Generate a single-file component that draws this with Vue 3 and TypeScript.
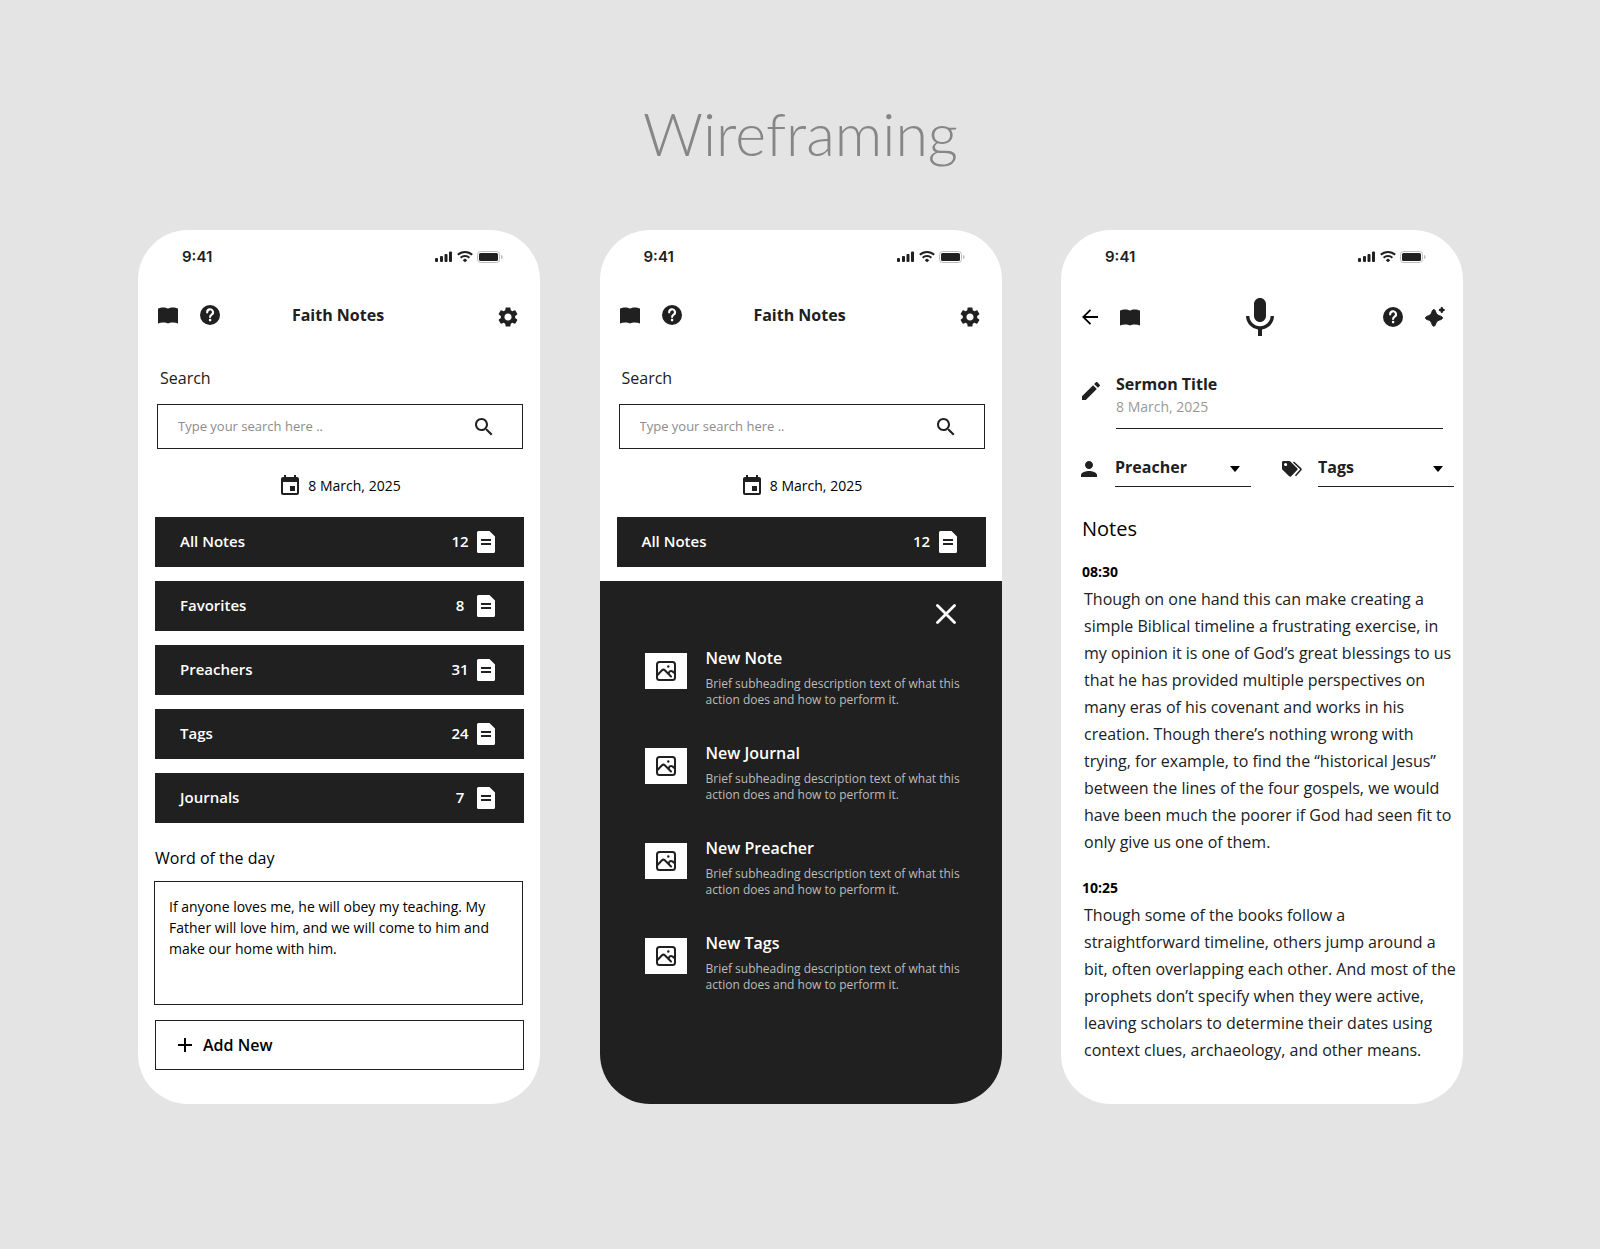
<script setup lang="ts">
import { ref } from 'vue'

interface Category {
  label: string
  count: number
}

interface NoteEntry {
  time: string
  text: string
}

const homeScreens = [
  { id: 'home', sheetOpen: false },
  { id: 'home-add', sheetOpen: true },
]

const categories: Category[] = [
  { label: 'All Notes', count: 12 },
  { label: 'Favorites', count: 8 },
  { label: 'Preachers', count: 31 },
  { label: 'Tags', count: 24 },
  { label: 'Journals', count: 7 },
]

const actions: string[] = ['New Note', 'New Journal', 'New Preacher', 'New Tags']

const sermonTitle = ref('Sermon Title')

const entries: NoteEntry[] = [
  {
    time: '08:30',
    text: `Though on one hand this can make creating a
simple Biblical timeline a frustrating exercise, in
my opinion it is one of God’s great blessings to us
that he has provided multiple perspectives on
many eras of his covenant and works in his
creation. Though there’s nothing wrong with
trying, for example, to find the “historical Jesus”
between the lines of the four gospels, we would
have been much the poorer if God had seen fit to
only give us one of them.`,
  },
  {
    time: '10:25',
    text: `Though some of the books follow a
straightforward timeline, others jump around a
bit, often overlapping each other. And most of the
prophets don’t specify when they were active,
leaving scholars to determine their dates using
context clues, archaeology, and other means.`,
  },
]
</script>

<template>
  <svg class="defs" width="0" height="0" aria-hidden="true">
    <symbol id="status" viewBox="0 0 68 14">
      <g fill="#202020">
        <rect x="0" y="8" width="3" height="4" rx="1" />
        <rect x="5" y="6" width="3" height="6" rx="1" />
        <rect x="9.5" y="4" width="3" height="8" rx="1" />
        <rect x="14" y="1.5" width="3" height="10.5" rx="1" />
        <path d="M30 8.6 32.3 10.2 30 12.2 27.7 10.2Z" />
      </g>
      <g fill="none" stroke="#202020" stroke-width="2">
        <path d="M22.8 4.8a10.4 10.4 0 0 1 14.4 0" />
        <path d="M25.6 7.7a6.4 6.4 0 0 1 8.8 0" />
      </g>
      <rect x="42.5" y="1.5" width="22" height="11" rx="3" fill="#fff" stroke="#bcbcbc" />
      <rect x="44" y="3" width="19" height="8" rx="1.5" fill="#202020" />
      <path d="M66 5c1.3.4 1.6 1.2 1.6 2s-.3 1.6-1.6 2z" fill="#bcbcbc" />
    </symbol>
    <symbol id="book" viewBox="0 0 20 17">
      <path d="M0 1.600C3 0 7.500 0 10 1.500 12.500 0 17 0 20 1.600V16.500C17 15.300 12.500 15.300 10 16.500 7.500 15.300 3 15.300 0 16.500Z" />
    </symbol>
    <symbol id="help" viewBox="0 0 20 20">
      <circle cx="10" cy="10" r="10" />
      <path d="M7.2 7.4a2.9 2.9 0 1 1 4.4 2.3c-1 .7-1.500 1.200-1.500 2.300" fill="none" stroke="#fff" stroke-width="2.1" stroke-linecap="round" />
      <circle cx="10.1" cy="15.1" r="1.3" fill="#fff" />
    </symbol>
    <symbol id="gear" viewBox="2 2 20 20">
      <path d="M19.140 12.940c.04-.3.06-.61.06-.94 0-.32-.02-.64-.07-.94l2.030-1.580c.18-.14.23-.41.12-.61l-1.920-3.320c-.12-.22-.37-.29-.59-.22l-2.390.96c-.5-.38-1.030-.7-1.620-.94l-.36-2.540c-.04-.24-.24-.41-.48-.41h-3.840c-.24 0-.43.17-.47.41l-.36 2.540c-.59.24-1.130.57-1.620.94l-2.390-.96c-.22-.08-.47 0-.59.22L2.740 8.870c-.12.21-.08.47.12.61l2.030 1.580c-.05.3-.09.63-.09.94s.02.64.07.94l-2.030 1.580c-.18.14-.23.41-.12.61l1.920 3.320c.12.22.37.29.59.22l2.390-.96c.5.38 1.030.7 1.620.94l.36 2.540c.05.24.24.41.48.41h3.840c.24 0 .44-.17.47-.41l.36-2.540c.59-.24 1.130-.56 1.620-.94l2.390.96c.22.08.47 0 .59-.22l1.920-3.320c.12-.22.07-.47-.12-.61l-2.010-1.580zM12 15.600c-1.980 0-3.600-1.620-3.600-3.600s1.620-3.600 3.600-3.600 3.600 1.620 3.600 3.600-1.620 3.600-3.600 3.600z" />
    </symbol>
    <symbol id="search" viewBox="0 0 24 24">
      <path d="M15.500 14h-.79l-.28-.27C15.410 12.590 16 11.110 16 9.500 16 5.910 13.090 3 9.500 3S3 5.910 3 9.500 5.910 16 9.500 16c1.610 0 3.090-.59 4.230-1.570l.27.28v.79l5 4.990L20.490 19l-4.990-5zm-6 0C7.010 14 5 11.990 5 9.500S7.010 5 9.500 5 14 7.010 14 9.500 11.990 14 9.500 14z" />
    </symbol>
    <symbol id="event" viewBox="0 0 24 24">
      <path d="M17 12h-5v5h5v-5zM16 1v2H8V1H6v2H5c-1.110 0-1.990.9-1.990 2L3 19c0 1.100.89 2 2 2h14c1.100 0 2-.9 2-2V5c0-1.100-.9-2-2-2h-1V1h-2zm3 18H5V8h14v11z" />
    </symbol>
    <symbol id="doc" viewBox="0 0 18 22">
      <path d="M1.500 0H12.500L18 5.500V20.500A1.500 1.500 0 0 1 16.500 22H1.500A1.500 1.500 0 0 1 0 20.500V1.500A1.500 1.500 0 0 1 1.500 0Z" fill="#fff" />
      <path d="M4 9h10M4 13h10" stroke="#202020" stroke-width="2" />
    </symbol>
    <symbol id="picture" viewBox="0 0 20 20">
      <g fill="none" stroke="#202020" stroke-width="2" stroke-linejoin="round">
        <rect x="1" y="1" width="18" height="18" rx="2.500" />
        <path d="M1.500 14 6 9.300c.8-.8 2-.8 2.800 0L15 15.500" stroke-linecap="round" />
        <path d="M13 13.200c-1-2.200 1.500-4 3.400-2.800L19 12.500" />
      </g>
      <circle cx="12.300" cy="5.500" r="1.200" fill="#202020" />
    </symbol>
    <symbol id="mic" viewBox="4 1 16 21">
      <path d="M12 14c1.660 0 2.990-1.340 2.990-3L15 5c0-1.660-1.340-3-3-3S9 3.340 9 5v6c0 1.660 1.340 3 3 3zm5.300-3c0 3-2.540 5.100-5.300 5.100S6.700 14 6.700 11H5c0 3.410 2.720 6.230 6 6.720V21h2v-3.280c3.280-.48 6-3.300 6-6.720h-1.700z" />
    </symbol>
    <symbol id="sparkle" viewBox="0 0 20 21">
      <path d="M8.800 2.600c1.200 0 1.700 1.600 2.200 3 .6 1.700 1.500 2.500 3.400 3.100 1.700.5 3.100 1 3.100 2.200s-1.400 1.700-3.100 2.200c-1.900.6-2.800 1.400-3.400 3.100-.5 1.400-1 3-2.200 3s-1.700-1.600-2.200-3c-.6-1.700-1.500-2.500-3.100-3.100C1.900 12.600.5 12.100.5 10.900s1.400-1.700 3-2.200c1.600-.6 2.500-1.400 3.100-3.100.5-1.400 1-3 2.200-3Z" stroke="#202020" />
      <path d="M16.800 1.200v3.600M15 3h3.600" stroke="#202020" stroke-width="2.400" stroke-linecap="round" />
    </symbol>
    <symbol id="pencil" viewBox="3 3 18 18">
      <path d="M3 17.250V21h3.750L17.810 9.940l-3.750-3.750L3 17.250zM20.710 7.040c.39-.39.39-1.020 0-1.410l-2.340-2.340c-.39-.39-1.020-.39-1.410 0l-1.830 1.830 3.750 3.750 1.830-1.830z" />
    </symbol>
    <symbol id="person" viewBox="4 4 16 16">
      <path d="M12 12c2.210 0 4-1.790 4-4s-1.790-4-4-4-4 1.790-4 4 1.790 4 4 4zm0 2c-2.670 0-8 1.340-8 4v2h16v-2c0-2.660-5.330-4-8-4z" />
    </symbol>
    <symbol id="tags" viewBox="0 0 20 16">
      <path fill-rule="evenodd" d="M1.300 0H7.200c.5 0 .9.200 1.200.5l6.800 6.700c.6.600.6 1.300 0 1.900l-6 6.200c-.6.600-1.400.6-2 0L.5 8.700C.2 8.400 0 8 0 7.500V1.300C0 .6.600 0 1.300 0ZM3.600 1.900a1.600 1.600 0 1 0 0 3.200 1.600 1.600 0 0 0 0-3.200Z" />
      <path d="M11.500 1 18.600 7.600c.5.500.5 1 0 1.500L13.500 14.800" fill="none" stroke="#202020" stroke-width="1.500" />
    </symbol>
  </svg>

  <main class="page">
    <h1 class="title">Wireframing</h1>

    <div class="phones">
      <section v-for="screen in homeScreens" :key="screen.id" class="phone">
        <div class="status">
          <span class="clock">9:41</span>
          <svg class="status-icons"><use href="#status" /></svg>
        </div>

        <header class="bar">
          <div class="tools">
            <button class="icon-btn" aria-label="Library"><svg class="i-book"><use href="#book" /></svg></button>
            <button class="icon-btn" aria-label="Help"><svg class="i-20"><use href="#help" /></svg></button>
          </div>
          <h2 class="bar-title">Faith Notes</h2>
          <div class="tools tools-end">
            <button class="icon-btn" aria-label="Settings"><svg class="i-20"><use href="#gear" /></svg></button>
          </div>
        </header>

        <div class="home">
          <label class="search-label" :for="`${screen.id}-search`">Search</label>
          <div class="search-box">
            <input :id="`${screen.id}-search`" class="search-input" type="text" placeholder="Type your search here .." />
            <button class="icon-btn" aria-label="Search"><svg class="i-24"><use href="#search" /></svg></button>
          </div>

          <div class="date">
            <svg class="i-24"><use href="#event" /></svg>
            <time datetime="2025-03-08">8 March, 2025</time>
          </div>

          <div class="list">
            <button
              v-for="item in screen.sheetOpen ? categories.slice(0, 1) : categories"
              :key="item.label"
              class="row"
            >
              <span class="row-label">{{ item.label }}</span>
              <span class="row-count">{{ item.count }}</span>
              <svg class="i-doc"><use href="#doc" /></svg>
            </button>
          </div>

          <template v-if="!screen.sheetOpen">
            <h3 class="word-title">Word of the day</h3>
            <p class="word-box">
              If anyone loves me, he will obey my teaching. My Father will love him, and we will come to him and make our home with him.
            </p>
            <button class="add">
              <svg class="i-plus" viewBox="0 0 14 14"><path d="M7 0v14M0 7h14" stroke="#000" stroke-width="2" /></svg>
              Add New
            </button>
          </template>
        </div>

        <div v-if="screen.sheetOpen" class="sheet">
          <button class="icon-btn close" aria-label="Close">
            <svg class="i-20" viewBox="0 0 20 20">
              <path d="M1.500 1.500 18.500 18.500M18.500 1.500 1.500 18.500" stroke="#fff" stroke-width="2.800" stroke-linecap="round" />
            </svg>
          </button>
          <ul class="actions">
            <li v-for="action in actions" :key="action">
              <button class="action">
                <span class="thumb"><svg class="i-20"><use href="#picture" /></svg></span>
                <span class="action-text">
                  <span class="action-title">{{ action }}</span>
                  <span class="action-desc">Brief subheading description text of what this action does and how to perform it.</span>
                </span>
              </button>
            </li>
          </ul>
        </div>
      </section>

      <section class="phone">
        <div class="status">
          <span class="clock">9:41</span>
          <svg class="status-icons"><use href="#status" /></svg>
        </div>

        <header class="bar bar-note">
          <div class="tools">
            <button class="icon-btn" aria-label="Back">
              <svg class="i-back" viewBox="0 0 16 16">
                <path d="M16 8H1M8.500.8 1.200 8l7.300 7.200" fill="none" stroke="#000" stroke-width="1.800" />
              </svg>
            </button>
            <button class="icon-btn" aria-label="Library"><svg class="i-book"><use href="#book" /></svg></button>
          </div>
          <button class="icon-btn mic-btn" aria-label="Record"><svg class="i-mic"><use href="#mic" /></svg></button>
          <div class="tools tools-note-end">
            <button class="icon-btn" aria-label="Help"><svg class="i-20"><use href="#help" /></svg></button>
            <button class="icon-btn" aria-label="Enhance"><svg class="i-sparkle"><use href="#sparkle" /></svg></button>
          </div>
        </header>

        <div class="sermon">
          <svg class="i-pencil"><use href="#pencil" /></svg>
          <div class="sermon-field">
            <input v-model="sermonTitle" class="sermon-title" type="text" aria-label="Sermon title" />
            <time class="sermon-date" datetime="2025-03-08">8 March, 2025</time>
          </div>
        </div>

        <div class="pickers">
          <svg class="i-person"><use href="#person" /></svg>
          <div class="picker">
            <select aria-label="Preacher"><option>Preacher</option></select>
            <svg class="caret" viewBox="0 0 10 6"><path d="M0 0h10L5.500 5.500a.8.8 0 0 1-1 0Z" /></svg>
          </div>
          <svg class="i-tags"><use href="#tags" /></svg>
          <div class="picker">
            <select aria-label="Tags"><option>Tags</option></select>
            <svg class="caret" viewBox="0 0 10 6"><path d="M0 0h10L5.500 5.500a.8.8 0 0 1-1 0Z" /></svg>
          </div>
        </div>

        <div class="notes">
          <h2 class="notes-title">Notes</h2>
          <article v-for="entry in entries" :key="entry.time" class="entry">
            <h3 class="entry-time">{{ entry.time }}</h3>
            <p class="entry-text">{{ entry.text }}</p>
          </article>
        </div>
      </section>
    </div>
  </main>
</template>

<style>
body {
  margin: 0;
  background: #e4e4e4;
}
</style>

<style scoped>
.defs {
  position: absolute;
}

.page {
  box-sizing: border-box;
  min-height: 100vh;
  padding: 99px 137px 144px 138px;
  background: #e4e4e4;
  color: #202020;
  font-family: 'Open Sans', 'Noto Sans', sans-serif;
}

h1,
h2,
h3,
p,
ul {
  margin: 0;
  padding: 0;
  font-weight: 400;
}

button,
input,
select {
  margin: 0;
  padding: 0;
  border: 0;
  border-radius: 0;
  background: none;
  color: inherit;
  font-family: inherit;
  outline: none;
}

svg {
  display: block;
  flex: none;
  fill: #202020;
}

.title {
  height: 131px;
  color: #868686;
  font-family: Lato, sans-serif;
  font-weight: 300;
  font-size: 59px;
  line-height: 70px;
  text-align: center;
}

.phones {
  display: flex;
  flex-wrap: wrap;
  justify-content: space-between;
  gap: 40px;
}

.phone {
  display: flex;
  flex: 1 1 340px;
  flex-direction: column;
  max-width: 402px;
  border-radius: 50px;
  background: #fff;
  overflow: hidden;
}

.status {
  display: flex;
  align-items: center;
  justify-content: space-between;
  height: 52px;
  padding: 0 37px 0 44px;
}

.clock {
  font-family: Inter, sans-serif;
  font-weight: 600;
  font-size: 15px;
}

.status-icons {
  width: 68px;
  height: 14px;
  margin-top: 2px;
}

.bar {
  box-sizing: border-box;
  display: grid;
  grid-template-columns: 1fr auto 1fr;
  align-items: center;
  height: 66px;
  padding: 0 22px 0 20px;
}

.bar-note {
  padding: 4px 18px 0 21px;
}

.bar-title {
  font-weight: 700;
  font-size: 16px;
  line-height: 24px;
}

.tools {
  display: flex;
  align-items: center;
  gap: 22px;
}

.tools-end {
  justify-content: flex-end;
  padding-top: 4px;
}

.tools-note-end {
  justify-content: flex-end;
}

.icon-btn {
  display: block;
}

.mic-btn {
  margin-right: 8px;
}

.i-20 {
  width: 20px;
  height: 20px;
}

.i-24 {
  width: 24px;
  height: 24px;
}

.i-book {
  width: 20px;
  height: 17px;
}

.i-back {
  width: 16px;
  height: 16px;
}

.i-mic {
  width: 32px;
  height: 42px;
}

.i-sparkle {
  width: 20px;
  height: 21px;
}

.home {
  display: flex;
  flex-direction: column;
  padding: 18px 16px 0 17px;
}

.search-label {
  padding-left: 5px;
  font-size: 16px;
  line-height: 24px;
}

.search-box {
  box-sizing: border-box;
  display: flex;
  align-items: center;
  height: 45px;
  margin: 14px 1px 0 2px;
  padding: 0 26px 0 20px;
  border: 1px solid #202020;
}

.search-input {
  flex: 1;
  min-width: 0;
  padding-bottom: 2px;
  font-size: 13px;
  line-height: 20px;
}

.search-input::placeholder {
  color: #8c8c8c;
  opacity: 1;
}

.date {
  display: flex;
  justify-content: center;
  gap: 6px;
  margin: 25px 0 19px;
  color: #000;
  font-size: 14px;
  line-height: 24px;
}

.list {
  display: flex;
  flex-direction: column;
  gap: 14px;
}

.row {
  display: flex;
  align-items: center;
  height: 50px;
  padding: 0 29px 0 25px;
  background: #202020;
  color: #fff;
  font-weight: 600;
  font-size: 15px;
  line-height: 20px;
}

.row-label {
  flex: 1;
  padding-bottom: 2px;
  text-align: left;
}

.row-count {
  width: 20px;
  margin-right: 7px;
  padding-bottom: 2px;
  text-align: center;
}

.i-doc {
  width: 18px;
  height: 22px;
}

.word-title {
  margin-top: 23px;
  color: #000;
  font-size: 16px;
  line-height: 24px;
}

.word-box {
  box-sizing: border-box;
  min-height: 124px;
  margin: 11px 1px 15px -1px;
  padding: 14px 20px 14px 14px;
  border: 1px solid #202020;
  color: #000;
  font-size: 14px;
  line-height: 21px;
}

.add {
  display: flex;
  align-items: center;
  gap: 11px;
  height: 50px;
  margin-bottom: 34px;
  padding-left: 22px;
  border: 1px solid #202020;
  color: #000;
  font-weight: 600;
  font-size: 16px;
}

.i-plus {
  width: 14px;
  height: 14px;
}

.sheet {
  flex: 1;
  margin-top: 14px;
  padding: 23px 36px 0 45px;
  background: #202020;
  color: #fff;
}

.close {
  margin: 0 10px 22px auto;
}

.actions {
  display: flex;
  flex-direction: column;
  gap: 33px;
  list-style: none;
}

.action {
  display: flex;
  align-items: flex-start;
  gap: 19px;
  text-align: left;
}

.thumb {
  display: flex;
  flex: none;
  align-items: center;
  justify-content: center;
  width: 42px;
  height: 36px;
  margin-top: 7px;
  background: #fff;
}

.action-text {
  display: flex;
  flex-direction: column;
  gap: 6px;
}

.action-title {
  font-weight: 600;
  font-size: 16px;
  line-height: 24px;
}

.action-desc {
  color: #bcbcbc;
  font-size: 12px;
  line-height: 16px;
}

.sermon {
  display: flex;
  gap: 16px;
  margin-top: 24px;
  padding: 0 20px 0 21px;
}

.i-pencil {
  width: 18px;
  height: 18px;
  margin-top: 10px;
}

.sermon-field {
  display: flex;
  flex: 1;
  flex-direction: column;
  min-width: 0;
  padding-bottom: 11px;
  border-bottom: 1px solid #202020;
}

.sermon-title {
  height: 23px;
  margin-bottom: 2px;
  font-weight: 700;
  font-size: 16px;
}

.sermon-date {
  color: #999;
  font-size: 14px;
  line-height: 20px;
}

.pickers {
  display: flex;
  align-items: center;
  margin-top: 18px;
  padding: 0 9px 0 20px;
}

.i-person {
  width: 16px;
  height: 16px;
  margin: 4px 18px 0 0;
}

.i-tags {
  width: 20px;
  height: 16px;
  margin: 4px 16px 0 31px;
}

.picker {
  position: relative;
  flex: 1;
  border-bottom: 1px solid #202020;
}

.picker select {
  appearance: none;
  width: 100%;
  height: 39px;
  font-weight: 700;
  font-size: 16px;
}

.caret {
  position: absolute;
  top: 19px;
  right: 11px;
  width: 10px;
  height: 6px;
  fill: #000;
  pointer-events: none;
}

.notes {
  padding: 28px 4px 40px 21px;
}

.notes-title {
  margin-bottom: 19px;
  color: #000;
  font-size: 20px;
  line-height: 28px;
}

.entry + .entry {
  margin-top: 22px;
}

.entry-time {
  margin-bottom: 4px;
  color: #000;
  font-weight: 700;
  font-size: 14px;
  line-height: 20px;
}

.entry-text {
  padding-left: 2px;
  font-size: 16px;
  line-height: 27px;
  white-space: pre-line;
}
</style>
